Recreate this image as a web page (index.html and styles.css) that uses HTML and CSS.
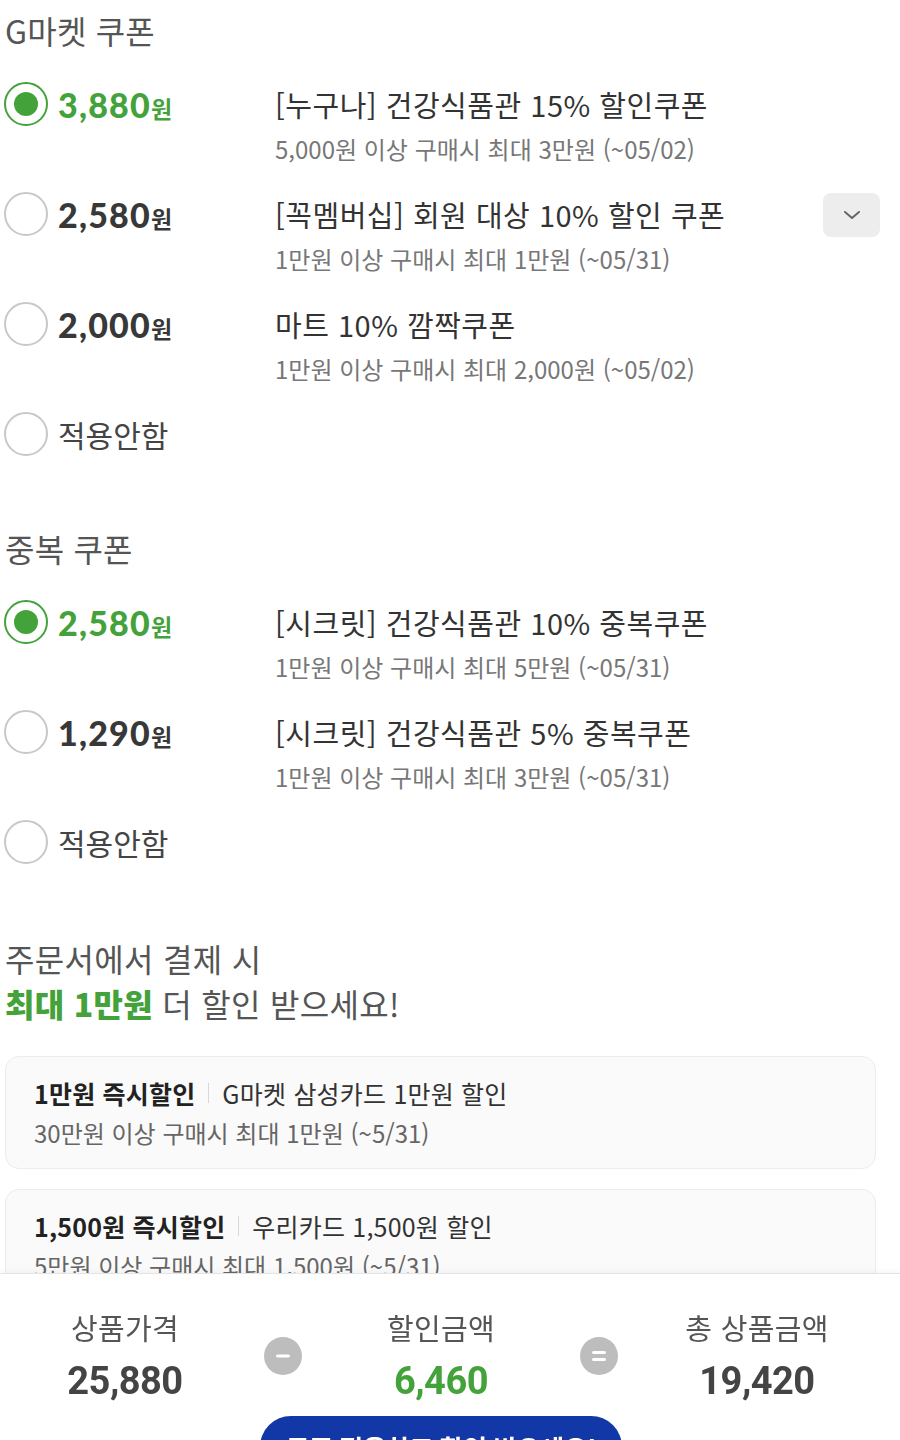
FILE: index.html
```html
<!DOCTYPE html>
<html lang="ko">
<head>
    <meta charset="UTF-8">
    <meta name="viewport" content="width=device-width, initial-scale=1.0">
    <title>쿠폰 적용</title>
    <link rel="stylesheet" href="styles.css">
</head>
<body>
    <div class="page">
        <!-- G마켓 쿠폰 -->
        <section class="coupon-section">
            <h2 class="section-title">G마켓 쿠폰</h2>

            <div class="coupon-row">
                <div class="coupon-pick">
                    <span class="radio checked"></span>
                    <span class="price on">3,880<small>원</small></span>
                </div>
                <div class="coupon-info">
                    <div class="coupon-name">[누구나] 건강식품관 15% 할인쿠폰</div>
                    <div class="coupon-cond">5,000원 이상 구매시 최대 3만원 (~05/02)</div>
                </div>
            </div>

            <div class="coupon-row">
                <div class="coupon-pick">
                    <span class="radio"></span>
                    <span class="price">2,580<small>원</small></span>
                </div>
                <div class="coupon-info">
                    <div class="coupon-name">[꼭멤버십] 회원 대상 10% 할인 쿠폰</div>
                    <div class="coupon-cond">1만원 이상 구매시 최대 1만원 (~05/31)</div>
                </div>
                <button class="more-btn" type="button" aria-label="더보기">
                    <svg width="18" height="10" viewBox="0 0 18 10"><path d="M2 2l7 6 7-6" fill="none" stroke="#666" stroke-width="2" stroke-linecap="round" stroke-linejoin="round"/></svg>
                </button>
            </div>

            <div class="coupon-row">
                <div class="coupon-pick">
                    <span class="radio"></span>
                    <span class="price">2,000<small>원</small></span>
                </div>
                <div class="coupon-info">
                    <div class="coupon-name">마트 10% 깜짝쿠폰</div>
                    <div class="coupon-cond">1만원 이상 구매시 최대 2,000원 (~05/02)</div>
                </div>
            </div>

            <div class="coupon-row none">
                <div class="coupon-pick">
                    <span class="radio"></span>
                    <span class="none-label">적용안함</span>
                </div>
            </div>
        </section>

        <!-- 중복 쿠폰 -->
        <section class="coupon-section">
            <h2 class="section-title">중복 쿠폰</h2>

            <div class="coupon-row">
                <div class="coupon-pick">
                    <span class="radio checked"></span>
                    <span class="price on">2,580<small>원</small></span>
                </div>
                <div class="coupon-info">
                    <div class="coupon-name">[시크릿] 건강식품관 10% 중복쿠폰</div>
                    <div class="coupon-cond">1만원 이상 구매시 최대 5만원 (~05/31)</div>
                </div>
            </div>

            <div class="coupon-row">
                <div class="coupon-pick">
                    <span class="radio"></span>
                    <span class="price">1,290<small>원</small></span>
                </div>
                <div class="coupon-info">
                    <div class="coupon-name">[시크릿] 건강식품관 5% 중복쿠폰</div>
                    <div class="coupon-cond">1만원 이상 구매시 최대 3만원 (~05/31)</div>
                </div>
            </div>

            <div class="coupon-row none">
                <div class="coupon-pick">
                    <span class="radio"></span>
                    <span class="none-label">적용안함</span>
                </div>
            </div>
        </section>

        <!-- 카드 할인 안내 -->
        <section class="promo">
            <h2 class="promo-title">주문서에서 결제 시<br><strong>최대 1만원</strong> 더 할인 받으세요!</h2>

            <div class="card-offer">
                <div class="offer-head"><b>1만원 즉시할인</b><span class="bar"></span>G마켓 삼성카드 1만원 할인</div>
                <div class="offer-cond">30만원 이상 구매시 최대 1만원 (~5/31)</div>
            </div>
            <div class="card-offer">
                <div class="offer-head"><b>1,500원 즉시할인</b><span class="bar"></span>우리카드 1,500원 할인</div>
                <div class="offer-cond">5만원 이상 구매시 최대 1,500원 (~5/31)</div>
            </div>
        </section>
    </div>

    <!-- 하단 합계 -->
    <div class="summary">
        <div class="sum-cols">
            <div class="sum-col">
                <div class="sum-label">상품가격</div>
                <div class="sum-value">25,880</div>
            </div>
            <span class="op">
                <svg width="38" height="38" viewBox="0 0 38 38"><rect x="12" y="17.5" width="14" height="3" rx="1.5" fill="#fff"/></svg>
            </span>
            <div class="sum-col">
                <div class="sum-label">할인금액</div>
                <div class="sum-value green">6,460</div>
            </div>
            <span class="op">
                <svg width="38" height="38" viewBox="0 0 38 38"><rect x="12" y="14" width="14" height="3" rx="1.5" fill="#fff"/><rect x="12" y="21" width="14" height="3" rx="1.5" fill="#fff"/></svg>
            </span>
            <div class="sum-col">
                <div class="sum-label">총 상품금액</div>
                <div class="sum-value">19,420</div>
            </div>
        </div>
        <button class="apply-btn" type="button">쿠폰 적용하고 할인 받으세요!</button>
    </div>
</body>
</html>
```

FILE: styles.css
```css
body {
    margin: 0;
    background: #fff;
    font-family: "Noto Sans CJK KR", "Noto Sans", sans-serif;
    color: #333;
}
.page {
    padding: 0 20px 0 5px;
}
.coupon-section {
    padding-top: 8px;
    margin-bottom: 62px;
}
.section-title {
    margin: 0 0 30px;
    font-size: 32px;
    font-weight: 400;
    line-height: 44px;
    color: #555;
    letter-spacing: 0.2px;
}
.coupon-row {
    display: flex;
    align-items: flex-start;
    height: 110px;
}
.coupon-row.none {
    height: 44px;
}
.coupon-pick {
    width: 270px;
    flex: none;
    display: flex;
    align-items: center;
    height: 44px;
}
.radio {
    box-sizing: border-box;
    width: 44px;
    height: 44px;
    border: 2px solid #c8c8c8;
    border-radius: 50%;
    margin-left: -1px;
    margin-right: 10px;
    display: flex;
    align-items: center;
    justify-content: center;
    flex: none;
}
.radio.checked {
    border-color: #44a23a;
}
.radio.checked::after {
    content: "";
    width: 24px;
    height: 24px;
    border-radius: 50%;
    background: #44a23a;
}
.price {
    font-family: "Lato", "Noto Sans CJK KR", sans-serif;
    font-weight: 900;
    font-size: 34px;
    color: #383838;
    letter-spacing: 1.2px;
}
.price small {
    font-family: "Noto Sans CJK KR", sans-serif;
    font-size: 23px;
    font-weight: 700;
    margin-left: 0;
    letter-spacing: 0;
}
.price.on {
    color: #44a23a;
}
.none-label {
    font-size: 30px;
    color: #444;
    letter-spacing: 0;
}
.coupon-info {
    flex: 1;
}
.coupon-name {
    font-size: 29px;
    line-height: 44px;
    color: #333;
    letter-spacing: 0.5px;
}
.coupon-cond {
    font-size: 24px;
    line-height: 34px;
    margin-top: 6px;
    color: #777;
    letter-spacing: 0;
}
.more-btn {
    width: 57px;
    height: 44px;
    margin: 1px 0 0 0;
    border: none;
    border-radius: 8px;
    background: #ededed;
    display: flex;
    align-items: center;
    justify-content: center;
    padding: 0;
}

.promo {
    padding-top: 10px;
}
.promo-title {
    margin: 0 0 30px;
    font-size: 32px;
    font-weight: 400;
    line-height: 45px;
    color: #555;
    letter-spacing: 0.3px;
}
.promo-title strong {
    color: #44a23a;
    font-weight: 900;
}
.card-offer {
    box-sizing: border-box;
    margin: 0 4px 20px 0;
    padding: 20px 28px 19px;
    border: 1px solid #ececec;
    border-radius: 14px;
    background: #fafafa;
}
.offer-head {
    display: flex;
    align-items: center;
    font-size: 25px;
    line-height: 32px;
    color: #333;
    letter-spacing: 0.2px;
}
.offer-head b {
    color: #222;
}
.bar {
    width: 1px;
    height: 20px;
    background: #d8d8d8;
    margin: 0 13px;
}
.offer-cond {
    margin-top: 8px;
    font-size: 24px;
    line-height: 32px;
    color: #666;
    letter-spacing: 0;
}

.summary {
    position: fixed;
    left: 0;
    right: 0;
    bottom: 0;
    height: 166px;
    overflow: hidden;
    background: #fff;
    border-top: 1px solid #e4e4e4;
    box-shadow: 0 -2px 6px rgba(0, 0, 0, 0.04);
}
.sum-cols {
    display: grid;
    grid-template-columns: 250px 38px 250px 38px 250px;
    column-gap: 14px;
    align-items: center;
    padding-top: 32px;
}
.sum-col {
    text-align: center;
}
.sum-label {
    font-size: 29px;
    line-height: 42px;
    color: #555;
    letter-spacing: 0.3px;
}
.sum-value {
    font-family: "Liberation Sans Narrow", "Roboto", sans-serif;
    font-weight: 700;
    font-size: 38px;
    line-height: 50px;
    margin-top: 8px;
    color: #444;
    letter-spacing: -0.5px;
}
.sum-value.green {
    color: #44a23a;
}
.op {
    width: 38px;
    height: 38px;
    border-radius: 50%;
    background: #bdbdbd;
    display: block;
}
.apply-btn {
    display: block;
    width: 362px;
    height: 62px;
    margin: 10px 0 0 260px;
    border: none;
    border-radius: 31px;
    background: #1237a6;
    color: #fff;
    font-family: "Noto Sans CJK KR", sans-serif;
    font-size: 26px;
    font-weight: 700;
    letter-spacing: -0.5px;
}
```
